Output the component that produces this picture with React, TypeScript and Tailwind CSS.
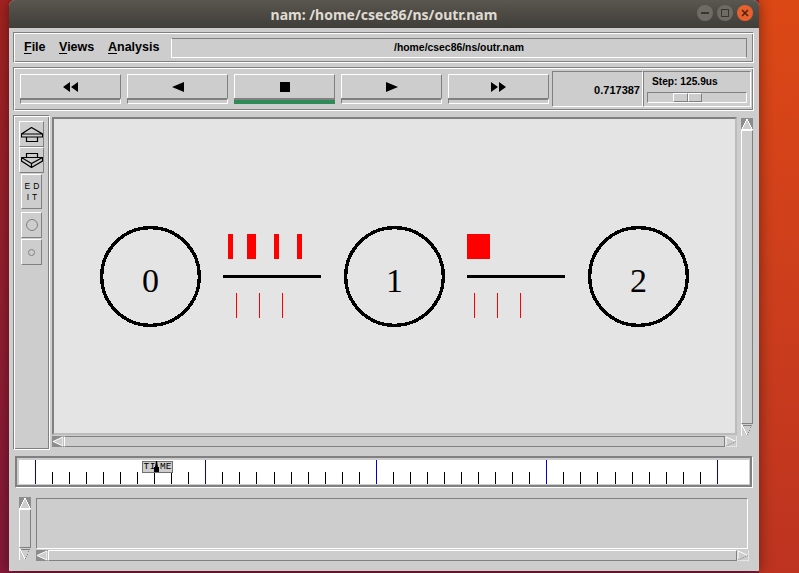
import { ReactNode } from 'react';

const sans = 'font-["Liberation_Sans",Arial,sans-serif]';
const groove =
  'border border-t-[#808080] border-l-[#808080] border-r-white border-b-white shadow-[inset_1px_1px_0_#fff,inset_-1px_-1px_0_#808080]';

// Tk style scroll arrows: the up/left ones sit on a dark tile, the others are dashed on the shaded side
function ScrollButton({ dir, h = 'h-[12px]' }: { dir: 'up' | 'down' | 'left' | 'right'; h?: string }) {
  return (
    <div className={`w-[12px] ${h} shrink-0`}>
      <svg width="100%" height="100%" viewBox="0 0 12 12" preserveAspectRatio="none" className="block" shapeRendering="crispEdges">
        {dir === 'up' && (
          <>
            <rect width="12" height="12" fill="#8c8c8c" />
            <path d="M6 1 L11 11 H1 Z" fill="#cdcdcd" stroke="#fff" strokeWidth="1" />
          </>
        )}
        {dir === 'left' && (
          <>
            <rect width="12" height="12" fill="#8c8c8c" />
            <path d="M1 6 L11 1 V11 Z" fill="#cdcdcd" stroke="#fff" strokeWidth="1" />
          </>
        )}
        {dir === 'down' && (
          <>
            <rect width="12" height="12" fill="#cdcdcd" />
            <path d="M1 1 H11" stroke="#808080" strokeWidth="1" />
            <path d="M1 1 L6 11" stroke="#fff" strokeWidth="1" />
            <path d="M11 1 L6 11" stroke="#808080" strokeWidth="1" strokeDasharray="1 1" />
            <path d="M0 0 V12 M12 0 V12" stroke="#fff" strokeWidth="1" />
          </>
        )}
        {dir === 'right' && (
          <>
            <rect width="12" height="12" fill="#cdcdcd" />
            <path d="M1 1 V11" stroke="#fff" strokeWidth="1" />
            <path d="M1 1 L11 6" stroke="#fff" strokeWidth="1" />
            <path d="M1 11 L11 6" stroke="#808080" strokeWidth="1" strokeDasharray="1 1" />
            <path d="M0 12 H12 M12 0 V12" stroke="#fff" strokeWidth="1" />
          </>
        )}
      </svg>
    </div>
  );
}

function TransportButton({ children, active }: { children: ReactNode; active?: boolean }) {
  return (
    <div className="w-[101px] h-[30px] flex flex-col">
      <div className="h-[24px] border border-white border-b-0 border-r-[#808080] flex items-center justify-center">
        {children}
      </div>
      <div
        className={
          active
            ? 'h-[6px] bg-[#2e8b57] border-t-2 border-[#808080]'
            : 'h-[6px] border-t-2 border-[#808080] border-l border-r border-b border-l-[#808080] border-r-white border-b-white'
        }
      />
    </div>
  );
}

function Glyph({ d, w }: { d: string; w: number }) {
  return (
    <svg width={w} height="12" viewBox={`0 0 ${w} 12`} className="block">
      <path d={d} fill="#000" />
    </svg>
  );
}

function ToolButton({ children, cls }: { children: ReactNode; cls: string }) {
  return (
    <div className={`${cls} mx-auto shrink-0 border border-white border-b-[#808080] border-r-[#808080] flex items-center justify-center`}>
      {children}
    </div>
  );
}

function Canvas() {
  return (
    <svg width="681" height="312" viewBox="54 119 681 312" className="block" shapeRendering="crispEdges">
      <g fill="none" stroke="#000" strokeWidth="3.4">
        <circle cx="150.5" cy="276.5" r="48.8" />
        <circle cx="394.5" cy="276.5" r="48.8" />
        <circle cx="638.5" cy="276.5" r="48.8" />
      </g>
      <g fontFamily="'Liberation Serif', 'Times New Roman', serif" fontSize="34" textAnchor="middle" fill="#000">
        <text x="150.5" y="292">0</text>
        <text x="394.5" y="292">1</text>
        <text x="638.5" y="292">2</text>
      </g>
      <rect x="223" y="275" width="98" height="3" fill="#000" />
      <rect x="467" y="275" width="98" height="3" fill="#000" />
      <g fill="#ff0000">
        <rect x="228" y="234" width="5" height="25" />
        <rect x="247" y="234" width="9" height="25" />
        <rect x="274" y="234" width="5" height="25" />
        <rect x="297" y="234" width="5" height="25" />
        <rect x="467" y="234" width="23" height="25" />
        <rect x="236" y="293" width="1" height="25" />
        <rect x="259" y="293" width="1" height="25" />
        <rect x="282" y="293" width="1" height="25" />
        <rect x="474" y="293" width="1" height="25" />
        <rect x="497" y="293" width="1" height="25" />
        <rect x="520" y="293" width="1" height="25" />
      </g>
    </svg>
  );
}

const ticks = Array.from({ length: 41 }, (_, i) => i);

function Timeline() {
  return (
    <svg width="730" height="24" viewBox="19 460 730 24" className="block" shapeRendering="crispEdges">
      {ticks.map((i) => {
        const x = Math.floor(35.3 + i * 17.05);
        const major = i % 10 === 0;
        return (
          <rect
            key={i}
            x={x}
            y={major ? 460 : 472}
            width="1"
            height={major ? 24 : 12}
            fill={major ? '#0000d0' : '#000'}
          />
        );
      })}
    </svg>
  );
}

export default function App() {
  return (
    <div className={`${sans} w-[799px] h-[573px] overflow-hidden flex bg-gradient-to-b from-[#a5231f] to-[#85193a]`}>
      <div className="w-[9px] shrink-0" />
      <div className="relative z-10 w-[750px] h-[571px] shrink-0 bg-[#cdcdcd] rounded-t-[6px] flex flex-col shadow-[0_0_14px_rgba(0,0,0,0.45)]">
        <div className="h-[28px] shrink-0 rounded-t-[6px] bg-gradient-to-b from-[#5a5650] to-[#403e39] relative flex items-center justify-center">
          <span className="text-[14px] font-bold text-[#dfdbd2] font-['Noto_Sans',sans-serif]">nam: /home/csec86/ns/outr.nam</span>
          <div className="absolute right-[6px] top-[5px] flex gap-[4px]">
            <div className="w-[16px] h-[16px] rounded-full bg-[#6d6b64] flex items-center justify-center">
              <div className="w-[8px] h-[2px] bg-[#38362f]" />
            </div>
            <div className="w-[16px] h-[16px] rounded-full bg-[#6d6b64] flex items-center justify-center">
              <div className="w-[8px] h-[8px] border border-[#38362f]" />
            </div>
            <div className="w-[16px] h-[16px] rounded-full bg-[#e8602c] flex items-center justify-center">
              <svg width="8" height="8" viewBox="0 0 8 8" className="block">
                <path d="M1 1 L7 7 M7 1 L1 7" stroke="#4a2010" strokeWidth="1.5" />
              </svg>
            </div>
          </div>
        </div>

        <div className="flex-1 flex flex-col pt-[4px] pl-[4px] pr-[5px]">
          {/* menu */}
          <div className={`${groove} h-[31px] shrink-0 flex items-center pl-[10px] pr-[6px] text-[12.5px] font-bold text-black`}>
            <span className="w-[35px]"><span className="underline underline-offset-2">F</span>ile</span>
            <span className="w-[49px]"><span className="underline underline-offset-2">V</span>iews</span>
            <span className="w-[63px]"><span className="underline underline-offset-2">A</span>nalysis</span>
            <div className="flex-1 h-[20px] border border-l-white border-t-[#808080] border-r-[#808080] border-b-white flex items-center justify-center text-[10.4px]">
              /home/csec86/ns/outr.nam
            </div>
          </div>

          {/* transport */}
          <div className={`${groove} h-[44px] mt-[4px] shrink-0 flex items-start pl-[6px]`}>
            <div className="flex gap-[6px] pt-[6px]">
              <TransportButton><Glyph w={15} d="M7 1 V11 L0 6 Z M15 1 V11 L8 6 Z" /></TransportButton>
              <TransportButton><Glyph w={12} d="M12 1 V11 L0 6 Z" /></TransportButton>
              <TransportButton active><Glyph w={10} d="M0 1 H10 V11 H0 Z" /></TransportButton>
              <TransportButton><Glyph w={12} d="M0 1 V11 L12 6 Z" /></TransportButton>
              <TransportButton><Glyph w={15} d="M0 1 V11 L7 6 Z M8 1 V11 L15 6 Z" /></TransportButton>
            </div>
            <div className="mt-[3px] ml-[3px] w-[91px] h-[36px] border border-t-[#808080] border-l-[#808080] border-r-white border-b-white flex items-center justify-end pr-[2px] pt-[2px] text-[11px] font-bold text-black">
              0.717387
            </div>
            <div className="mt-[3px] w-[108px] h-[36px] border border-t-[#808080] border-l-[#808080] border-r-white border-b-white flex flex-col px-[3px] pt-[3px]">
              <div className="pl-[5px] text-[10.2px] font-bold leading-[14px] text-black">Step: 125.9us</div>
              <div className="mt-[3px] h-[11px] border border-t-[#808080] border-l-[#808080] border-r-white border-b-white flex pl-[25px]">
                <div className="w-[15px] h-[9px] border border-white border-r-[#808080] border-b-[#808080]" />
                <div className="w-[14px] h-[9px] border border-white border-r-[#808080] border-b-[#808080]" />
              </div>
            </div>
          </div>

          {/* main */}
          <div className="flex mt-[4px] h-[336px] shrink-0">
            <div className={`${groove} w-[37px] h-[335px] shrink-0 pt-[5px] flex flex-col`}>
              <ToolButton cls="w-[25px] h-[26px]">
                <svg width="22" height="15" viewBox="0 0 22 15" className="block shrink-0" fill="none" stroke="#000" strokeWidth="1.2">
                  <path d="M10.5 .5 L.5 7 V10 H5.5 V14.5 H16.5 V10 H21.5 V7 Z M.5 7 H21.5 M5.5 10 H16.5" />
                </svg>
              </ToolButton>
              <ToolButton cls="w-[25px] h-[26px]">
                <svg width="22" height="15" viewBox="0 0 22 15" className="block shrink-0" fill="none" stroke="#000" strokeWidth="1.2">
                  <path d="M5.5 .5 H16.5 V4.5 H21.5 V8 L10.5 14.5 L.5 8 V4.5 H5.5 Z M.5 4.5 L10.5 10.5 L21.5 4.5 M10.5 10.5 V14.5 M5.5 4.5 H16.5" />
                </svg>
              </ToolButton>
              <ToolButton cls="w-[21px] h-[35px] mt-[1px]">
                <div className="text-[8.5px] leading-[11px] text-center tracking-[3px] text-black pl-[4px]">
                  <div>ED</div>
                  <div>IT</div>
                </div>
              </ToolButton>
              <ToolButton cls="w-[21px] h-[26px] mt-[3px]">
                <div className="w-[12px] h-[12px] rounded-full border border-[#808080]" />
              </ToolButton>
              <ToolButton cls="w-[21px] h-[26px] mt-[1px]">
                <div className="w-[7px] h-[7px] rounded-full border border-[#808080]" />
              </ToolButton>
            </div>

            <div className="ml-[2px] w-[685px] pt-[2px] flex flex-col">
              <div className="w-[685px] h-[318px] shrink-0 border-2 border-t-[#808080] border-l-[#808080] border-r-[#bcbcbc] border-b-[#bcbcbc] bg-[#e4e4e4]">
                <Canvas />
              </div>
              <div className="mt-[1px] w-[685px] h-[11px] flex items-stretch">
                <ScrollButton dir="left" h="h-[11px]" />
                <div className="flex-1 border border-t-[#808080] border-l-white border-r-[#808080] border-b-[#808080]" />
                <ScrollButton dir="right" h="h-[11px]" />
              </div>
            </div>

            <div className="ml-[4px] mt-[3px] w-[12px] h-[318px] flex flex-col">
              <ScrollButton dir="up" />
              <div className="flex-1 border border-l-white border-t-white border-r-[#808080] border-b-[#808080]" />
              <ScrollButton dir="down" />
            </div>
          </div>

          {/* timeline */}
          <div className="relative w-[738px] h-[32px] mt-[5px] ml-[2px] shrink-0 border border-t-[#808080] border-l-[#808080] border-r-white border-b-white shadow-[inset_1px_1px_0_#808080,inset_-2px_-2px_0_#808080] p-[3px]">
            <div className="bg-white h-[24px]">
              <Timeline />
            </div>
            <div className="absolute left-[126px] top-[4px] w-[31px] h-[12px] border border-[#707070] bg-[#cdcdcd] text-[9.5px] leading-[10px] font-['Liberation_Mono',monospace] text-center text-black">
              <span className="tracking-[0.6px]">TI</span><span className="pl-[4px]">ME</span>
            </div>
            <svg width="7" height="11" viewBox="0 0 7 11" className="block absolute left-[137px] top-[4px]">
              <path d="M3 0 H4 L5 6 H6 V11 H1 V6 H2 Z" fill="#000" />
            </svg>
          </div>

          {/* log */}
          <div className="flex mt-[9px] ml-[6px]">
            <div className="w-[12px] h-[63px] flex flex-col shrink-0">
              <ScrollButton dir="up" />
              <div className="flex-1 border border-t-white border-l-white border-r-[#808080] border-b-[#808080]" />
              <ScrollButton dir="down" />
            </div>
            <div className="ml-[5px] w-[713px] flex flex-col">
              <div className="mt-[1px] h-[51px] mr-[1px] border border-t-[#808080] border-l-[#808080] border-r-white border-b-white" />
              <div className="mt-[1px] h-[11px] flex">
                <ScrollButton dir="left" h="h-[11px]" />
                <div className="flex-1 border border-t-white border-l-white border-r-[#808080] border-b-[#808080]" />
                <ScrollButton dir="right" h="h-[11px]" />
              </div>
            </div>
          </div>
        </div>
      </div>
      <div className="flex-1 bg-gradient-to-b from-[#dc4815] to-[#bd3320]" />
    </div>
  );
}
